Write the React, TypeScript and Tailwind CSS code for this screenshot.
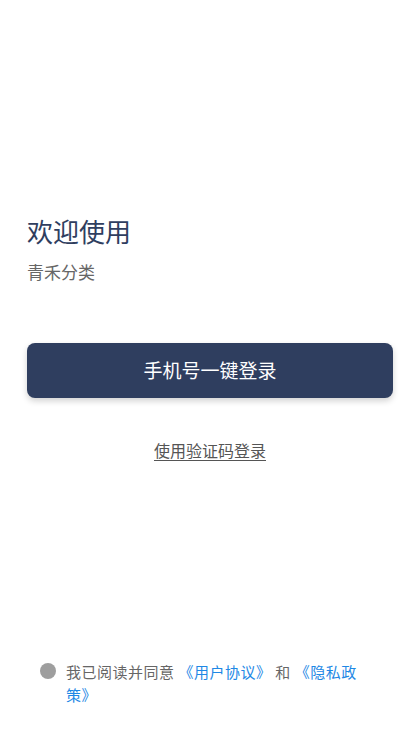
export default function App() {
  const font = { fontFamily: '"Noto Sans CJK SC", "Noto Sans", sans-serif' };

  return (
    <div className="flex h-[748px] w-full flex-col bg-white px-[27px]" style={font}>
      <div className="pt-[212px]">
        <h1 className="text-[26px] leading-[38px] text-[#2f3e5f]">欢迎使用</h1>
        <p className="mt-[9px] text-[17px] leading-[26px] text-[#666666]">青禾分类</p>
      </div>

      <button
        type="button"
        className="mt-[58px] h-[55px] w-full rounded-[8px] bg-[#2f3e5f] text-[19px] text-white shadow-[0_3px_6px_rgba(0,0,0,0.18)]"
      >
        手机号一键登录
      </button>

      <div className="mt-[40px] flex justify-center">
        <span className="text-[16px] leading-[24px] text-[#555555] underline underline-offset-[3px]">
          使用验证码登录
        </span>
      </div>

      <div className="mt-auto mb-[42px] flex items-start gap-[10px] pl-[13px] pr-[27px]">
        <span className="mt-[3px] h-[16px] w-[16px] shrink-0 rounded-full bg-[#9e9e9e]" />
        <p className="w-[305px] text-[15px] leading-[23px] tracking-[0.5px] text-[#666666]">
          我已阅读并同意 <span className="text-[#1e88e5]">《用户协议》</span> 和{' '}
          <span className="text-[#1e88e5]">《隐私政策》</span>
        </p>
      </div>
    </div>
  );
}
